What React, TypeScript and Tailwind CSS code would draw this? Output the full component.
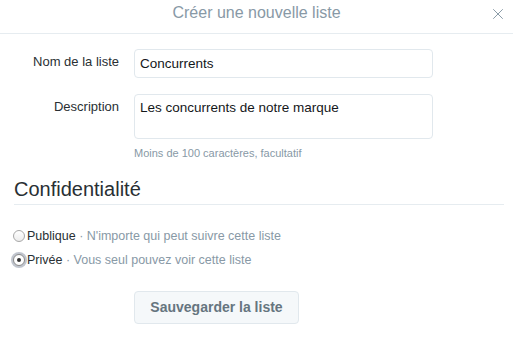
import { X } from "lucide-react";

const font = { fontFamily: '"Liberation Sans", Arial, sans-serif' };

export default function App() {
  return (
    <div className="w-[514px] h-[338px] bg-white overflow-hidden" style={font}>
      {/* Header */}
      <div className="relative h-[34px] mr-[1px] border-b border-[#e6ecf0] flex items-center justify-center">
        <h1 className="text-[16px] text-[#8899a6] leading-none -mt-[7px]">Créer une nouvelle liste</h1>
        <button className="absolute right-[6px] top-[5px] text-[#8899a6]">
          <X className="w-[18px] h-[18px]" strokeWidth={1.3} />
        </button>
      </div>

      {/* Form */}
      <div className="pt-[15px]">
        <div className="flex items-start">
          <label className="w-[119px] text-right text-[13px] text-[#292f33] pt-[3px]">Nom de la liste</label>
          <input
            className="ml-[15px] w-[299px] h-[29px] border border-[#e1e8ed] rounded-[4px] px-[5px] text-[13.5px] text-[#14171a] outline-none"
            defaultValue="Concurrents"
          />
        </div>
        <div className="flex items-start mt-[16px]">
          <label className="w-[119px] text-right text-[13px] text-[#292f33] pt-[3px]">Description</label>
          <div className="ml-[15px] w-[299px]">
            <textarea
              className="w-full h-[45px] border border-[#e1e8ed] rounded-[4px] px-[5px] py-[3px] text-[13.5px] text-[#14171a] resize-none outline-none block"
              defaultValue="Les concurrents de notre marque"
            />
            <p className="text-[11px] text-[#8899a6] mt-[6px]">Moins de 100 caractères, facultatif</p>
          </div>
        </div>
      </div>

      {/* Confidentialité */}
      <div className="ml-[14px] mr-[10px] mt-[15px] border-b border-[#e6ecf0] pb-[3px]">
        <h2 className="text-[20px] leading-[24px] text-[#292f33]">Confidentialité</h2>
      </div>

      <div className="ml-[13px] mt-[22px] flex flex-col gap-[6px] text-[12.5px] leading-[18px]">
        <label className="flex items-center gap-[2px]">
          <span className="w-[12px] h-[12px] rounded-full border border-[#a8a8a8] bg-gradient-to-b from-white to-[#ececec]" />
          <span className="text-[#292f33]">
            Publique <span className="text-[#8899a6]">· N'importe qui peut suivre cette liste</span>
          </span>
        </label>
        <label className="flex items-center gap-[2px]">
          <span className="w-[12px] h-[12px] rounded-full border border-[#8a8a8a] bg-white flex items-center justify-center shadow-[0_0_0_2px_rgba(140,150,165,0.55)]">
            <span className="w-[4px] h-[4px] rounded-full bg-[#333]" />
          </span>
          <span className="text-[#292f33]">
            Privée <span className="text-[#8899a6]">· Vous seul pouvez voir cette liste</span>
          </span>
        </label>
      </div>

      <div className="ml-[134px] mt-[22px]">
        <button className="w-[165px] h-[33px] border border-[#e1e8ed] rounded-[4px] bg-[#f5f8fa] text-[14px] font-bold text-[#66757f]">
          Sauvegarder la liste
        </button>
      </div>
    </div>
  );
}
